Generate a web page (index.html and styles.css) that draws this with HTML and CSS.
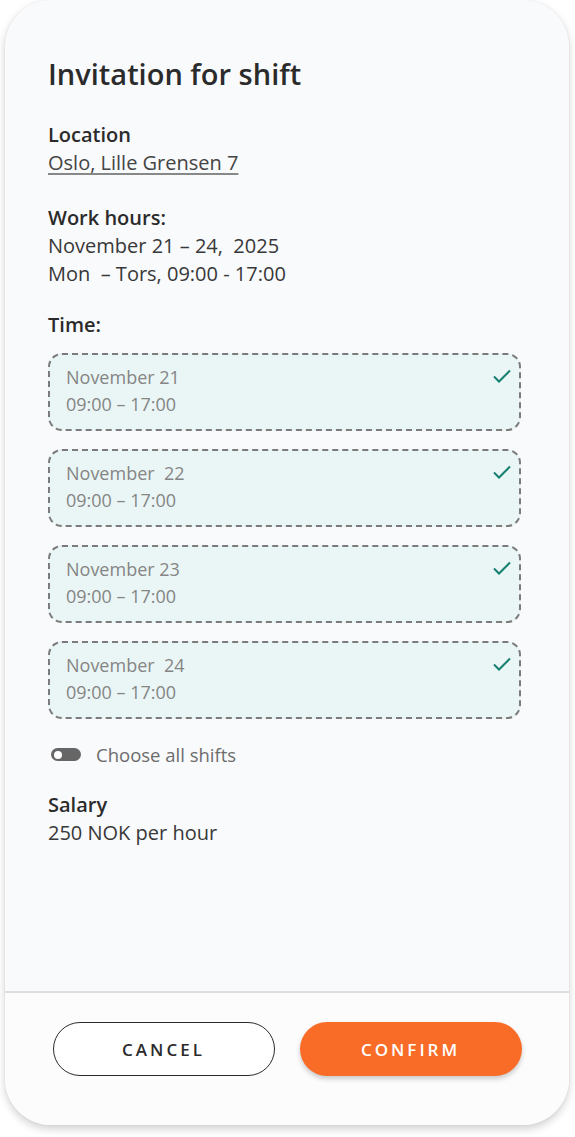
FILE: index.html
```html
<!DOCTYPE html>
<html>
<head>
    <meta charset="UTF-8">
    <title>Invitation for shift</title>
    <link rel="stylesheet" href="styles.css">
</head>
<body>
    <div class="card">
        <div class="content">
            <h1>Invitation for shift</h1>

            <div class="section">
                <div class="label">Location</div>
                <a class="link" href="#">Oslo, Lille Grensen 7</a>
            </div>

            <div class="section">
                <div class="label">Work hours:</div>
                <div class="text">November 21 – 24,&nbsp; 2025</div>
                <div class="text">Mon&nbsp; – Tors, 09:00 - 17:00</div>
            </div>

            <div class="section section-time">
                <div class="label">Time:</div>
                <div class="shifts">
                    <div class="shift">
                        <div class="shift-info">
                            <div>November 21</div>
                            <div>09:00 – 17:00</div>
                        </div>
                        <svg class="check" width="20" height="16" viewBox="0 0 20 16"><path d="M2 8.5 L7 13.5 L18 2.5" fill="none" stroke="#14806f" stroke-width="2"/></svg>
                    </div>
                    <div class="shift">
                        <div class="shift-info">
                            <div>November&nbsp; 22</div>
                            <div>09:00 – 17:00</div>
                        </div>
                        <svg class="check" width="20" height="16" viewBox="0 0 20 16"><path d="M2 8.5 L7 13.5 L18 2.5" fill="none" stroke="#14806f" stroke-width="2"/></svg>
                    </div>
                    <div class="shift">
                        <div class="shift-info">
                            <div>November 23</div>
                            <div>09:00 – 17:00</div>
                        </div>
                        <svg class="check" width="20" height="16" viewBox="0 0 20 16"><path d="M2 8.5 L7 13.5 L18 2.5" fill="none" stroke="#14806f" stroke-width="2"/></svg>
                    </div>
                    <div class="shift">
                        <div class="shift-info">
                            <div>November&nbsp; 24</div>
                            <div>09:00 – 17:00</div>
                        </div>
                        <svg class="check" width="20" height="16" viewBox="0 0 20 16"><path d="M2 8.5 L7 13.5 L18 2.5" fill="none" stroke="#14806f" stroke-width="2"/></svg>
                    </div>
                </div>
            </div>

            <div class="toggle-row">
                <span class="toggle"><span class="knob"></span></span>
                <span>Choose all shifts</span>
            </div>

            <div class="section">
                <div class="label">Salary</div>
                <div class="text">250 NOK per hour</div>
            </div>
        </div>

        <div class="footer">
            <button type="button" class="btn btn-cancel">CANCEL</button>
            <button type="button" class="btn btn-confirm">CONFIRM</button>
        </div>
    </div>
</body>
</html>
```

FILE: styles.css
```css
/* Page */
body {
    margin: 0;
    padding: 0 6px 12px 5px;
    background-color: #ffffff;
    font-family: "Open Sans", "Lato", sans-serif;
    color: #2b2b2b;
}

/* Card */
.card {
    height: 1125px;
    display: flex;
    flex-direction: column;
    background-color: #f9fafc;
    border-radius: 46px;
    box-shadow: 0px 4px 8px rgba(0, 0, 0, 0.18), 0px 0px 2px rgba(0, 0, 0, 0.08);
    overflow: hidden;
}

.content {
    flex: 1;
    padding: 56px 48px 0 43px;
}

h1 {
    margin: 0 0 30px;
    font-size: 29px;
    font-weight: 600;
    line-height: 36px;
    color: #2b2b2b;
}

.section {
    margin-bottom: 28px;
}

.section-time {
    margin-top: -4px;
    margin-bottom: 23px;
}

.label {
    margin-bottom: 1px;
    font-size: 20px;
    font-weight: 600;
    line-height: 26px;
}

.text,
.link {
    font-size: 20px;
    font-weight: 400;
    line-height: 28px;
    color: #383838;
}

.link {
    display: inline-block;
    color: #444;
    text-decoration: underline;
    text-decoration-color: #888;
    text-underline-offset: 3px;
}

/* Shift list */
.shifts {
    display: flex;
    flex-direction: column;
    gap: 18px;
    margin-top: 15px;
}

.shift {
    height: 78px;
    box-sizing: border-box;
    display: flex;
    align-items: flex-start;
    justify-content: space-between;
    padding: 0 7px 0 16px;
    background-color: #eaf6f5;
    border: 2px dashed #7b7b7b;
    border-radius: 14px;
}

.shift-info {
    padding-top: 9px;
    font-size: 18px;
    line-height: 27px;
    color: #858585;
}

.check {
    margin-top: 13px;
}

/* Toggle */
.toggle-row {
    display: flex;
    align-items: center;
    gap: 15px;
    margin: 0 0 25px 3px;
    font-size: 18.5px;
    color: #6c6c6c;
}

.toggle {
    width: 30px;
    height: 13px;
    border-radius: 7px;
    background-color: #666;
    display: flex;
    align-items: center;
    padding-left: 3px;
    box-sizing: border-box;
}

.knob {
    width: 8px;
    height: 8px;
    border-radius: 50%;
    background-color: #fff;
}

/* Footer */
.footer {
    height: 134px;
    display: flex;
    justify-content: center;
    gap: 25px;
    padding-top: 29px;
    box-sizing: border-box;
    background-color: #fcfcfc;
    border-top: 2px solid #dedede;
}

.btn {
    width: 222px;
    height: 54px;
    border-radius: 27px;
    font-family: "Open Sans", "Lato", sans-serif;
    font-size: 17px;
    font-weight: 600;
    letter-spacing: 3px;
    cursor: pointer;
}

.btn-cancel {
    background-color: #fff;
    border: 1.5px solid #2b2b2b;
    color: #2b2b2b;
}

.btn-confirm {
    background-color: #f86c27;
    border: none;
    color: #fff;
    box-shadow: 0px 3px 5px rgba(0, 0, 0, 0.2);
}
```
